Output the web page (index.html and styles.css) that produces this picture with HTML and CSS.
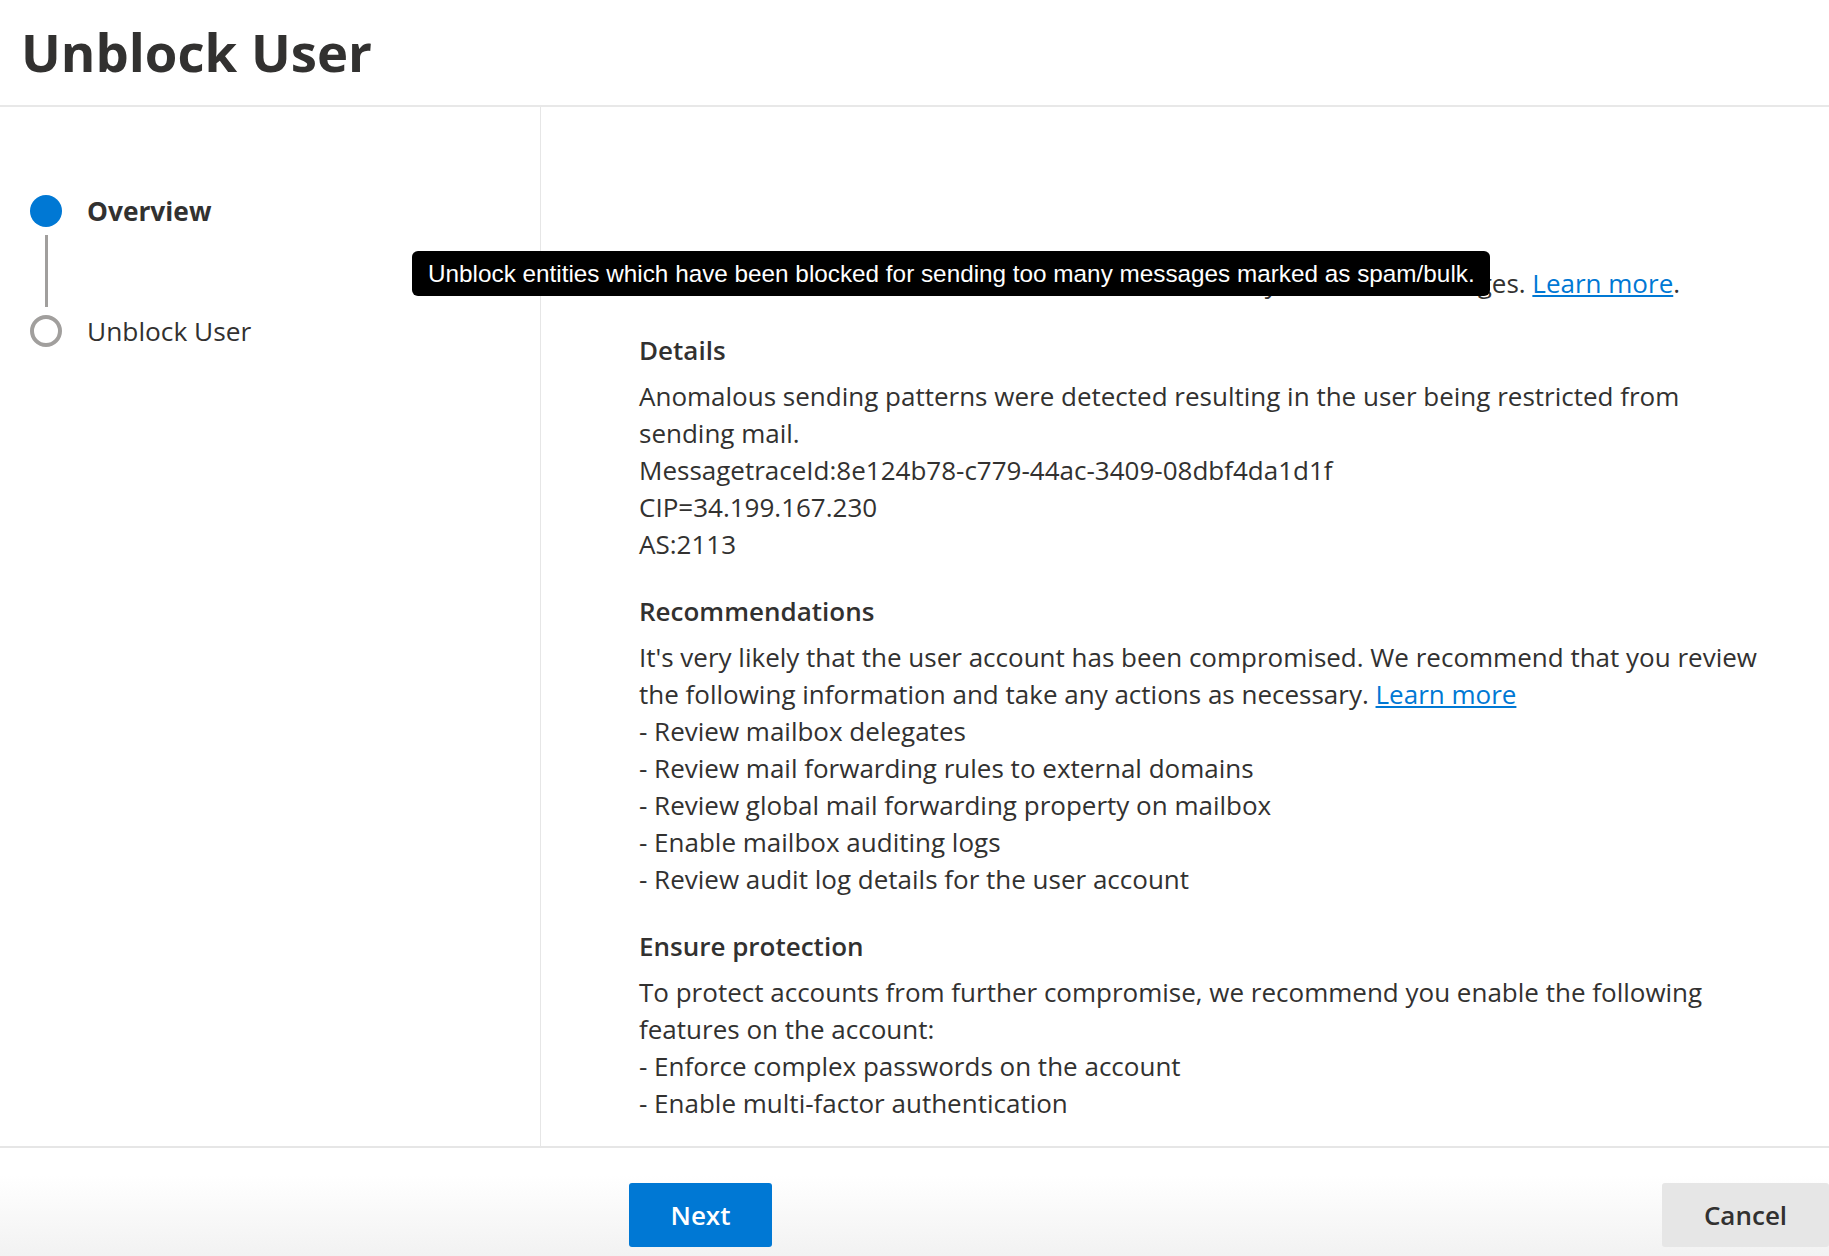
FILE: index.html
```html
<!DOCTYPE html>
<html lang="en">
<head>
<meta charset="utf-8">
<title>Unblock User</title>
<link rel="stylesheet" href="styles.css">
</head>
<body>
<div class="page">
  <header class="header">
    <h1 class="title">Unblock User</h1>
  </header>
  <div class="main">
    <nav class="steps">
      <div class="step step-active">
        <span class="dot dot-filled"></span>
        <span class="step-label">Overview</span>
      </div>
      <div class="connector"></div>
      <div class="step">
        <span class="dot dot-hollow"></span>
        <span class="step-label">Unblock User</span>
      </div>
    </nav>
    <section class="content">
      <div class="tooltip">Unblock entities which have been blocked for sending too many messages marked as spam/bulk.</div>
      <p class="intro">Use this wizard to unblock the selected users so they can send messages. <a href="#" class="link">Learn more</a>.</p>

      <div class="block">
        <h2 class="heading">Details</h2>
        <p class="text">Anomalous sending patterns were detected resulting in the user being restricted from sending mail.<br>MessagetraceId:8e124b78-c779-44ac-3409-08dbf4da1d1f<br>CIP=34.199.167.230<br>AS:2113</p>
      </div>

      <div class="block">
        <h2 class="heading">Recommendations</h2>
        <p class="text">It's very likely that the user account has been compromised. We recommend that you review the following information and take any actions as necessary. <a href="#" class="link">Learn more</a><br>- Review mailbox delegates<br>- Review mail forwarding rules to external domains<br>- Review global mail forwarding property on mailbox<br>- Enable mailbox auditing logs<br>- Review audit log details for the user account</p>
      </div>

      <div class="block">
        <h2 class="heading">Ensure protection</h2>
        <p class="text">To protect accounts from further compromise, we recommend you enable the following features on the account:<br>- Enforce complex passwords on the account<br>- Enable multi-factor authentication</p>
      </div>
    </section>
  </div>
  <footer class="footer">
    <button class="btn btn-primary" type="button">Next</button>
    <button class="btn btn-secondary" type="button">Cancel</button>
  </footer>
</div>
</body>
</html>
```
FILE: styles.css
```css
* {
  box-sizing: border-box;
}

html,
body {
  margin: 0;
  padding: 0;
}

body {
  width: 1829px;
  height: 1256px;
  overflow: hidden;
  background: #ffffff;
  color: #323130;
  font-family: "Open Sans", "Noto Sans", sans-serif;
}

.page {
  display: flex;
  flex-direction: column;
  height: 1256px;
}

.header {
  flex: none;
  height: 107px;
  border-bottom: 2px solid #e8e8e8;
  padding: 26px 0 0 21px;
}

.title {
  margin: 0;
  font-size: 52.7px;
  line-height: 52px;
  font-weight: 700;
  color: #323130;
}

.main {
  flex: 1;
  display: flex;
  min-height: 0;
}

.steps {
  flex: none;
  width: 541px;
  border-right: 1px solid #e6e6e6;
  padding: 88px 0 0 30px;
  display: flex;
  flex-direction: column;
}

.step {
  display: flex;
  align-items: center;
  gap: 25px;
  height: 32px;
}

.dot {
  flex: none;
  width: 32px;
  height: 32px;
  border-radius: 50%;
}

.dot-filled {
  background: #0078d4;
}

.dot-hollow {
  border: 4px solid #a19f9d;
  background: #ffffff;
}

.connector {
  width: 3px;
  height: 72px;
  margin: 8px 0 8px 14.5px;
  background: #a19f9d;
}

.step-label {
  font-size: 26.3px;
  line-height: 32px;
  color: #323130;
  white-space: nowrap;
}

.step-active .step-label {
  font-weight: 700;
}

.content {
  position: relative;
  flex: 1;
  min-width: 0;
  padding: 158px 63px 0 98px;
  font-size: 26px;
  line-height: 37px;
}

.intro,
.text,
.heading {
  margin: 0;
}

.intro {
  white-space: nowrap;
}

.block {
  margin-top: 30px;
}

.heading {
  font-size: 26px;
  line-height: 37px;
  font-weight: 600;
  margin-bottom: 9px;
}

.link {
  color: #0078d4;
  text-decoration: underline;
}

.tooltip {
  position: absolute;
  left: -129px;
  top: 144px;
  z-index: 2;
  height: 45px;
  padding: 0 15px 0 16px;
  border-radius: 6px;
  background: #000000;
  color: #ffffff;
  font-family: "Liberation Sans", Arial, sans-serif;
  font-size: 24.3px;
  line-height: 45px;
  white-space: nowrap;
}

.footer {
  flex: none;
  height: 110px;
  border-top: 2px solid #e6e6e6;
  background: linear-gradient(to bottom, #ffffff 0%, #ffffff 25%, #f2f2f2 100%);
  display: flex;
  align-items: flex-start;
  padding: 35px 0 0 629px;
}

.btn {
  height: 64px;
  border: none;
  border-radius: 3px;
  font-family: "Open Sans", "Noto Sans", sans-serif;
  font-size: 26px;
  font-weight: 600;
  padding: 0;
  cursor: pointer;
}

.btn-primary {
  width: 143px;
  background: #0078d4;
  color: #ffffff;
}

.btn-secondary {
  width: 167px;
  margin-left: auto;
  background: #e6e6e6;
  color: #323130;
}
```
